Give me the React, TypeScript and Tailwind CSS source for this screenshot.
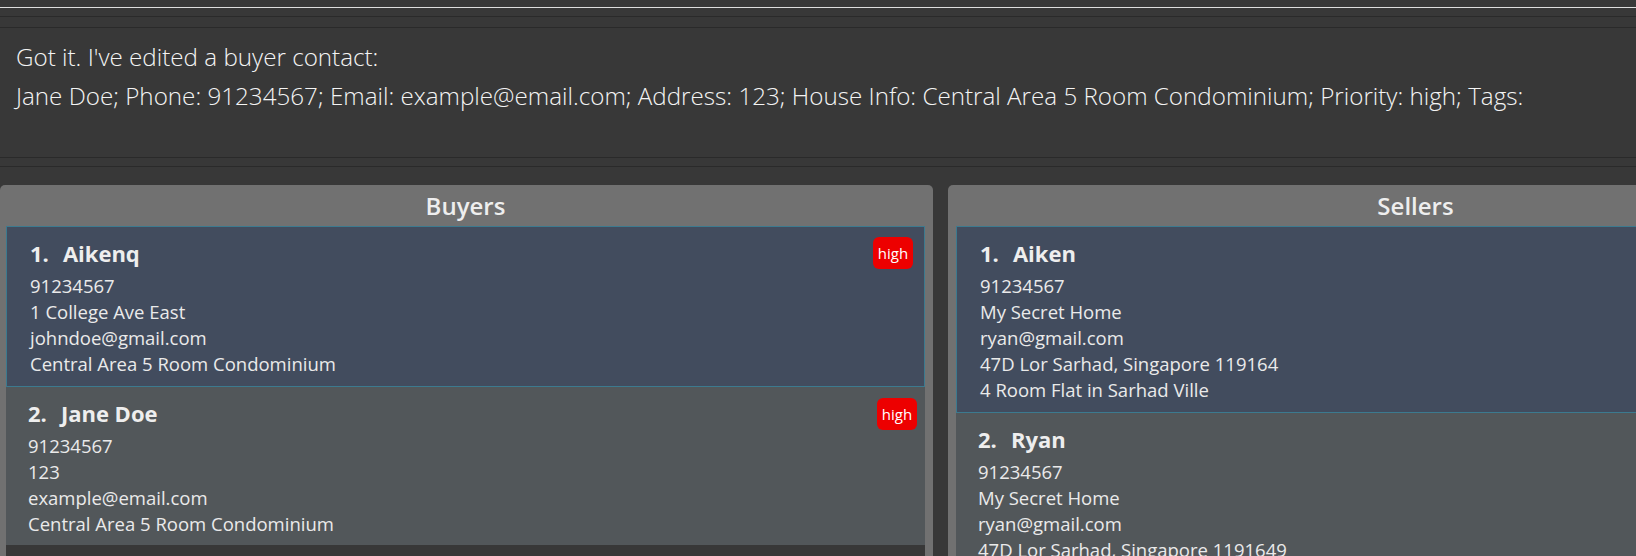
import React from "react";

type Person = {
  name: string;
  lines: string[];
  priority?: string;
};

const buyers: Person[] = [
  {
    name: "Aikenq",
    lines: ["91234567", "1 College Ave East", "johndoe@gmail.com", "Central Area 5 Room Condominium"],
    priority: "high",
  },
  {
    name: "Jane Doe",
    lines: ["91234567", "123", "example@email.com", "Central Area 5 Room Condominium"],
    priority: "high",
  },
];

const sellers: Person[] = [
  {
    name: "Aiken",
    lines: [
      "91234567",
      "My Secret Home",
      "ryan@gmail.com",
      "47D Lor Sarhad, Singapore 119164",
      "4 Room Flat in Sarhad Ville",
    ],
  },
  {
    name: "Ryan",
    lines: [
      "91234567",
      "My Secret Home",
      "ryan@gmail.com",
      "47D Lor Sarhad, Singapore 1191649",
      "4 Room Flat in Sarhad Ville",
    ],
  },
];

function Card({ p, index, selected }: { p: Person; index: number; selected: boolean }) {
  return (
    <div
      className={
        selected
          ? "flex items-start border border-[#3c7a8f] bg-[#424c5e] pl-[23px] pr-[11px] pt-[11px] pb-[9px]"
          : "flex items-start bg-[#52575a] pl-[22px] pr-[8px] pt-[11px] pb-[8px]"
      }
    >
      <div className="flex-1 min-w-0">
        <div className="flex h-[30px] text-[22px] leading-[30px] font-bold text-[#eeeeee] mb-[5px] whitespace-nowrap">
          <span>{index}.</span>
          <span className="ml-[14px]">{p.name}</span>
        </div>
        {p.lines.map((l, i) => (
          <div key={i} className="text-[18.5px] leading-[26px] text-[#eaeaea] whitespace-nowrap">
            {l}
          </div>
        ))}
      </div>
      {p.priority && (
        <div
          className={
            (selected ? "mt-[-1px] " : "mt-0 ") +
            "flex h-[32px] w-[40px] shrink-0 items-center justify-center rounded-[6px] bg-[#ed0000] text-[15px] text-white"
          }
        >
          {p.priority}
        </div>
      )}
    </div>
  );
}

function Panel({ title, people, left }: { title: string; people: Person[]; left: boolean }) {
  return (
    <div
      className={
        "flex w-[933px] shrink-0 flex-col rounded-t-[5px] bg-[#717171] " +
        (left ? "pl-[6px] pr-[8px]" : "pl-[8px] pr-[6px]")
      }
    >
      <div className="h-[41px] text-center text-[24px] font-semibold leading-[41px] text-[#eeeeee]">{title}</div>
      <div className="flex flex-1 flex-col bg-[#383838]">
        {people.map((p, i) => (
          <Card key={i} p={p} index={i + 1} selected={i === 0} />
        ))}
      </div>
    </div>
  );
}

export default function App() {
  return (
    <div
      className="h-[556px] w-[1636px] overflow-hidden bg-[#383838]"
      style={{ fontFamily: '"Open Sans", "Noto Sans", sans-serif' }}
    >
      <div className="h-[7px]" />
      <div className="h-px bg-[#dedede]" />
      <div className="h-[8px]" />
      <div className="h-px bg-[#2a2a2a]" />
      <div className="h-[10px]" />
      <div className="h-[131px] border-y border-[#2a2a2a] pl-[16px] pt-[9px] text-[24.2px] font-light leading-[39px] text-[#f4f4f4]">
        <div className="whitespace-nowrap">Got it. I've edited a buyer contact:</div>
        <div className="whitespace-nowrap">
          Jane Doe; Phone: 91234567; Email: example@email.com; Address: 123; House Info: Central Area 5 Room
          Condominium; Priority: high; Tags:
        </div>
      </div>
      <div className="h-[8px]" />
      <div className="h-px bg-[#2a2a2a]" />
      <div className="h-[18px]" />
      <div className="flex h-[371px] gap-[15px]">
        <Panel title="Buyers" people={buyers} left />
        <Panel title="Sellers" people={sellers} left={false} />
      </div>
    </div>
  );
}
